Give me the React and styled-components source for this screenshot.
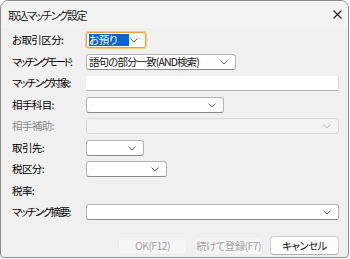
import React from 'react';
import styled, { createGlobalStyle } from 'styled-components';

const GlobalStyle = createGlobalStyle`
  html, body {
    margin: 0;
    padding: 0;
    background: #ffffff;
  }
  body {
    font-family: "Noto Sans CJK JP", "Noto Sans", sans-serif;
    font-feature-settings: "palt";
  }
`;

const Window = styled.div`
  box-sizing: border-box;
  width: 349px;
  height: 258px;
  display: flex;
  flex-direction: column;
  background: #f0f0f0;
  border: 1px solid #8c8c8c;
  border-radius: 8px 8px 4px 4px;
  overflow: hidden;
`;

const TitleBar = styled.div`
  height: 27px;
  display: flex;
  align-items: center;
  justify-content: space-between;
  padding: 0 6px 0 7px;
  background: #f3f3f3;
`;

const Title = styled.span`
  font-size: 11px;
  letter-spacing: -1.6px;
  color: #1a1a1a;
`;

const Close = styled.svg`
  width: 9px;
  height: 9px;
`;

const Body = styled.div`
  padding: 4px 9px 0 11px;
  display: flex;
  flex-direction: column;
`;

const Form = styled.div`
  display: grid;
  grid-template-columns: 74px 1fr;
  grid-auto-rows: 21.5px;
`;

const Label = styled.div`
  font-size: 10.5px;
  line-height: 16px;
  letter-spacing: ${({ tight }) => (tight ? `${-tight}px` : '-0.6px')};
  color: ${({ disabled }) => (disabled ? '#8a8a8a' : '#000000')};
  white-space: nowrap;
`;

const Field = styled.div`
  box-sizing: border-box;
  position: relative;
  width: ${({ w }) => (w ? `${w}px` : '100%')};
  height: 16px;
  display: flex;
  align-items: center;
  padding: 0 16px 0 2px;
  font-size: 10.5px;
  letter-spacing: -0.9px;
  color: #111;
  background: ${({ disabled }) => (disabled ? '#f3f3f3' : '#ffffff')};
  border: 1px solid ${({ disabled }) => (disabled ? '#dadada' : '#b4b4b4')};
  border-bottom-color: ${({ disabled }) => (disabled ? '#dadada' : '#8a8a8a')};
  border-radius: 3px;
  white-space: nowrap;

  &.focused {
    border: 1px solid #e5a03a;
    box-shadow: 0 0 0 1px #f7cd80;
  }

  &.plain {
    border: none;
    border-bottom: 1px solid #b4b4b4;
    border-right: 1px solid #d8d8d8;
    border-radius: 1px;
    height: 15px;
    margin-top: 1px;
  }
`;

const Selected = styled.span`
  display: inline-block;
  width: 41px;
  height: 12px;
  line-height: 12px;
  letter-spacing: -0.4px;
  background: #0a64d0;
  color: #ffffff;
`;

const Chevron = styled.svg`
  position: absolute;
  right: 7px;
  top: 50%;
  width: 8px;
  height: 5px;
  margin-top: -2px;
`;

const Buttons = styled.div`
  display: flex;
  justify-content: flex-end;
  gap: 7px;
  margin-top: 10px;
`;

const Button = styled.div`
  box-sizing: border-box;
  width: ${({ w }) => w}px;
  height: 19px;
  display: flex;
  align-items: center;
  justify-content: center;
  font-size: 10.5px;
  letter-spacing: -0.6px;
  white-space: nowrap;
  border-radius: 4px;
  color: ${({ disabled }) => (disabled ? '#a5a5a5' : '#111111')};
  background: ${({ disabled }) => (disabled ? '#f5f5f5' : '#fdfdfd')};
  border: 1px solid ${({ disabled }) => (disabled ? '#ebebeb' : '#d0d0d0')};
  border-bottom-color: ${({ disabled }) => (disabled ? '#ebebeb' : '#b0b0b0')};
`;

const Down = ({ disabled }) => (
  <Chevron viewBox="0 0 8 5">
    <path d="M0.5 0.5 L4 4 L7.5 0.5" fill="none" stroke={disabled ? '#b5b5b5' : '#606060'} strokeWidth="1" />
  </Chevron>
);

const Select = ({ w, value, disabled, className, children }) => (
  <Field w={w} disabled={disabled} className={className}>
    {children || value}
    <Down disabled={disabled} />
  </Field>
);

const App = () => (
  <>
    <GlobalStyle />
    <Window>
      <TitleBar>
        <Title>取込マッチング設定</Title>
        <Close viewBox="0 0 9 9">
          <path d="M0.5 0.5 L8.5 8.5 M8.5 0.5 L0.5 8.5" stroke="#222" strokeWidth="1.1" />
        </Close>
      </TitleBar>
      <Body>
        <Form>
          <Label>お取引区分:</Label>
          <div>
            <Select w={60} className="focused">
              <Selected>お預り</Selected>
            </Select>
          </div>

          <Label tight={2.1}>マッチングモード:</Label>
          <div>
            <Select w={150} value="語句の部分一致(AND検索)" />
          </div>

          <Label tight={1.5}>マッチング対象:</Label>
          <div>
            <Field className="plain" />
          </div>

          <Label>相手科目:</Label>
          <div>
            <Select w={138} />
          </div>

          <Label disabled>相手補助:</Label>
          <div>
            <Select disabled />
          </div>

          <Label>取引先:</Label>
          <div>
            <Select w={58} />
          </div>

          <Label>税区分:</Label>
          <div>
            <Select w={81} />
          </div>

          <Label>税率:</Label>
          <div />

          <Label tight={1.5}>マッチング摘要:</Label>
          <div>
            <Select />
          </div>
        </Form>
        <Buttons>
          <Button w={69} disabled>OK(F12)</Button>
          <Button w={69} disabled>続けて登録(F7)</Button>
          <Button w={69}>キャンセル</Button>
        </Buttons>
      </Body>
    </Window>
  </>
);

export default App;
